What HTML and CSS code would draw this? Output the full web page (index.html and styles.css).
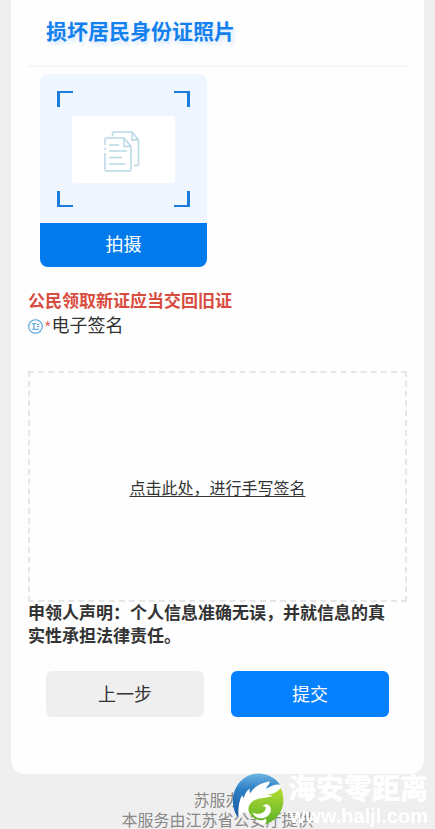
FILE: index.html
```html
<!DOCTYPE html>
<html lang="zh-CN">
<head>
    <meta charset="UTF-8">
    <meta name="viewport" content="width=device-width, initial-scale=1.0">
    <title>损坏居民身份证照片</title>
    <link rel="stylesheet" href="styles.css">
</head>
<body>

<main class="card">
    <h1 class="title">损坏居民身份证照片</h1>

    <button type="button" class="upload">
        <span class="upload-area">
            <span class="frame">
                <span class="preview">
                    <svg class="doc-icon" viewBox="0 0 36 41" aria-hidden="true">
                        <path d="M8.500 5.500V2.500a1.500 1.500 0 0 1 1.500-1.500H28l6.500 8V33a1.500 1.500 0 0 1-1.500 1.500H30"/>
                        <path d="M28 1v8h6.500"/>
                        <path d="M1 14V8.500A1.500 1.500 0 0 1 2.500 7H20l7 8.500V38.500a1.500 1.500 0 0 1-1.500 1.500h-23A1.500 1.500 0 0 1 1 38.500V22M1 17v2"/>
                        <path d="M20 7v8.500h7"/>
                        <path d="M5 14h10M5 20h18M5 26.500h13M5 33h16"/>
                    </svg>
                </span>
            </span>
        </span>
        <span class="upload-label">拍摄</span>
    </button>

    <p class="warning">公民领取新证应当交回旧证</p>
    <div class="sign-title">
        <svg class="sign-icon" viewBox="0 0 14 14" aria-hidden="true">
            <circle cx="7" cy="7" r="6.300"/>
            <path d="M3.500 4.500h4M5.500 4.500v4.500M8.500 5h2M8.500 7h2M4 9.500h6.500"/>
        </svg>
        <span class="required">*</span>
        <span>电子签名</span>
    </div>

    <div class="sign-box">
        <a href="#sign">点击此处，进行手写签名</a>
    </div>

    <p class="statement">申领人声明：个人信息准确无误，并就信息的真实性承担法律责任。</p>

    <div class="actions">
        <button type="button" class="btn">上一步</button>
        <button type="submit" class="btn btn-primary">提交</button>
    </div>
</main>

<footer class="footer">
    <p>苏服办</p>
    <p>本服务由江苏省公安厅提供</p>
</footer>

<div class="watermark">
    <svg class="watermark-logo" viewBox="5 8 156 156" aria-hidden="true">
        <defs>
            <linearGradient id="blue" x1="0" y1="0" x2="0" y2="1">
                <stop offset="0" stop-color="#6db4e4"/>
                <stop offset="0.350" stop-color="#2f80c4"/>
                <stop offset="1" stop-color="#1558a0"/>
            </linearGradient>
            <linearGradient id="green" x1="0" y1="0" x2="0" y2="1">
                <stop offset="0" stop-color="#b4dc32"/>
                <stop offset="1" stop-color="#5cb028"/>
            </linearGradient>
        </defs>
        <path fill="#fff" d="M24 142C24 105 26 85 40 66L60 50 122 32 150 46 156 60 140 90 124 140 108 162 88 162 70 140 40 120z"/>
        <path fill="url(#blue)" d="M24 142C6 120 2 84 15 56 30 22 62 6 94 10 118 13 138 26 149 43 136 40 122 47 106 55 111 49 116 42 119 33 90 38 71 50 60 69 57 64 57 60 59 54 48 62 43 72 40 84 37 80 36 77 36 73 27 88 23 108 24 142z"/>
        <path fill="url(#green)" d="M151 52C168 90 158 132 124 153 116 158 110 161 103 163 109 156 110 150 106 145 88 156 66 147 56 126 51 113 57 97 74 89 91 81 113 83 127 76 116 74 108 74 98 74 124 73 140 67 151 52z"/>
        <path fill="#fff" d="M66 126C84 136 103 128 106 115 107 108 102 106 96 109 101 98 117 99 121 112 126 130 106 148 84 143 76 141 70 135 66 126z"/>
    </svg>
    <div class="watermark-text">
        <strong>海安零距离</strong>
        <span>www.haljl.com</span>
    </div>
</div>

</body>
</html>
```

FILE: styles.css
```css
* {
    box-sizing: border-box;
}
body {
    margin: 0;
    font-family: "Liberation Sans", "Noto Sans CJK SC", sans-serif;
    background-color: #efefef;
    color: #333;
}
p {
    margin: 0;
}
button {
    padding: 0;
    border: none;
    font-family: inherit;
    font-size: 18px;
    cursor: pointer;
}
.card {
    margin: 0 11px;
    padding: 0 17px 57px;
    background-color: #fefefe;
    border-radius: 0 0 14px 14px;
}
.title {
    margin: 0 0 7px;
    padding: 16px 18px 17px;
    border-bottom: 2px solid #f6f6f6;
    font-size: 21px;
    line-height: 32px;
    color: #1280ee;
    text-shadow: 2px 3px 4px #d4e5fa;
}

/* 拍摄 */
.upload {
    display: block;
    width: 167px;
    margin-left: 12px;
    border-radius: 8px;
    background-color: #eff6ff;
    overflow: hidden;
}
.upload-area {
    display: block;
    padding: 17px 17px 16px;
}
.frame {
    display: flex;
    align-items: center;
    justify-content: center;
    height: 116px;
    /* 四个角 */
    --c: linear-gradient(#1b7cdc, #1b7cdc);
    background:
        var(--c) left top / 16px 2px, var(--c) left top / 3px 16px,
        var(--c) right top / 16px 2px, var(--c) right top / 3px 16px,
        var(--c) left bottom / 16px 2px, var(--c) left bottom / 3px 16px,
        var(--c) right bottom / 16px 2px, var(--c) right bottom / 3px 16px;
    background-repeat: no-repeat;
}
.preview {
    display: flex;
    align-items: center;
    justify-content: center;
    width: 103px;
    height: 67px;
    border-radius: 4px;
    background-color: #fff;
}
.doc-icon {
    width: 36px;
    height: 41px;
    margin: 4px 3px 0 0;
    fill: none;
    stroke: #b9d7e6;
    stroke-width: 1.5;
    stroke-linejoin: round;
}
.upload-label {
    display: block;
    line-height: 44px;
    background-color: #007aec;
    color: #fff;
}

.warning {
    margin-top: 23px;
    font-size: 17px;
    font-weight: bold;
    line-height: 24px;
    color: #d94c40;
}

/* 签名 */
.sign-title {
    display: flex;
    align-items: center;
    font-size: 18px;
    line-height: 24px;
}
.sign-icon {
    width: 15px;
    height: 15px;
    margin-right: 2px;
    fill: none;
    stroke: #4a9fdc;
}
.required {
    margin-right: 1px;
    font-size: 14px;
    color: #d94c40;
}
.sign-box {
    display: flex;
    align-items: center;
    justify-content: center;
    height: 231px;
    margin-top: 33px;
    border: 2px dashed #e6e6e6;
    font-size: 16px;
}
.sign-box a {
    color: #333;
    text-underline-offset: 2px;
}
.statement {
    padding-right: 12px;
    font-size: 17px;
    font-weight: bold;
    line-height: 23px;
}

.actions {
    display: flex;
    gap: 27px;
    padding: 0 18px;
    margin-top: 23px;
}
.btn {
    flex: 1;
    height: 46px;
    padding-bottom: 3px;
    border-radius: 6px;
    background-color: #efefef;
    color: #333;
}
.btn-primary {
    background-color: #0580ff;
    color: #fff;
}

.footer {
    padding-top: 17px;
    font-size: 16px;
    line-height: 20px;
    text-align: center;
    color: #888;
}

/* 水印 */
.watermark {
    position: fixed;
    right: 7px;
    bottom: 2px;
    display: flex;
    align-items: center;
    gap: 4px;
    color: #fff;
    pointer-events: none;
}
.watermark-logo {
    width: 52px;
    height: 52px;
    margin-bottom: 2px;
}
.watermark-text {
    display: flex;
    flex-direction: column;
    align-items: flex-end;
    font-weight: bold;
}
.watermark-text strong {
    font-size: 28px;
    font-weight: 900;
    line-height: 31px;
}
.watermark-text span {
    font-size: 20px;
    line-height: 22px;
}
```
